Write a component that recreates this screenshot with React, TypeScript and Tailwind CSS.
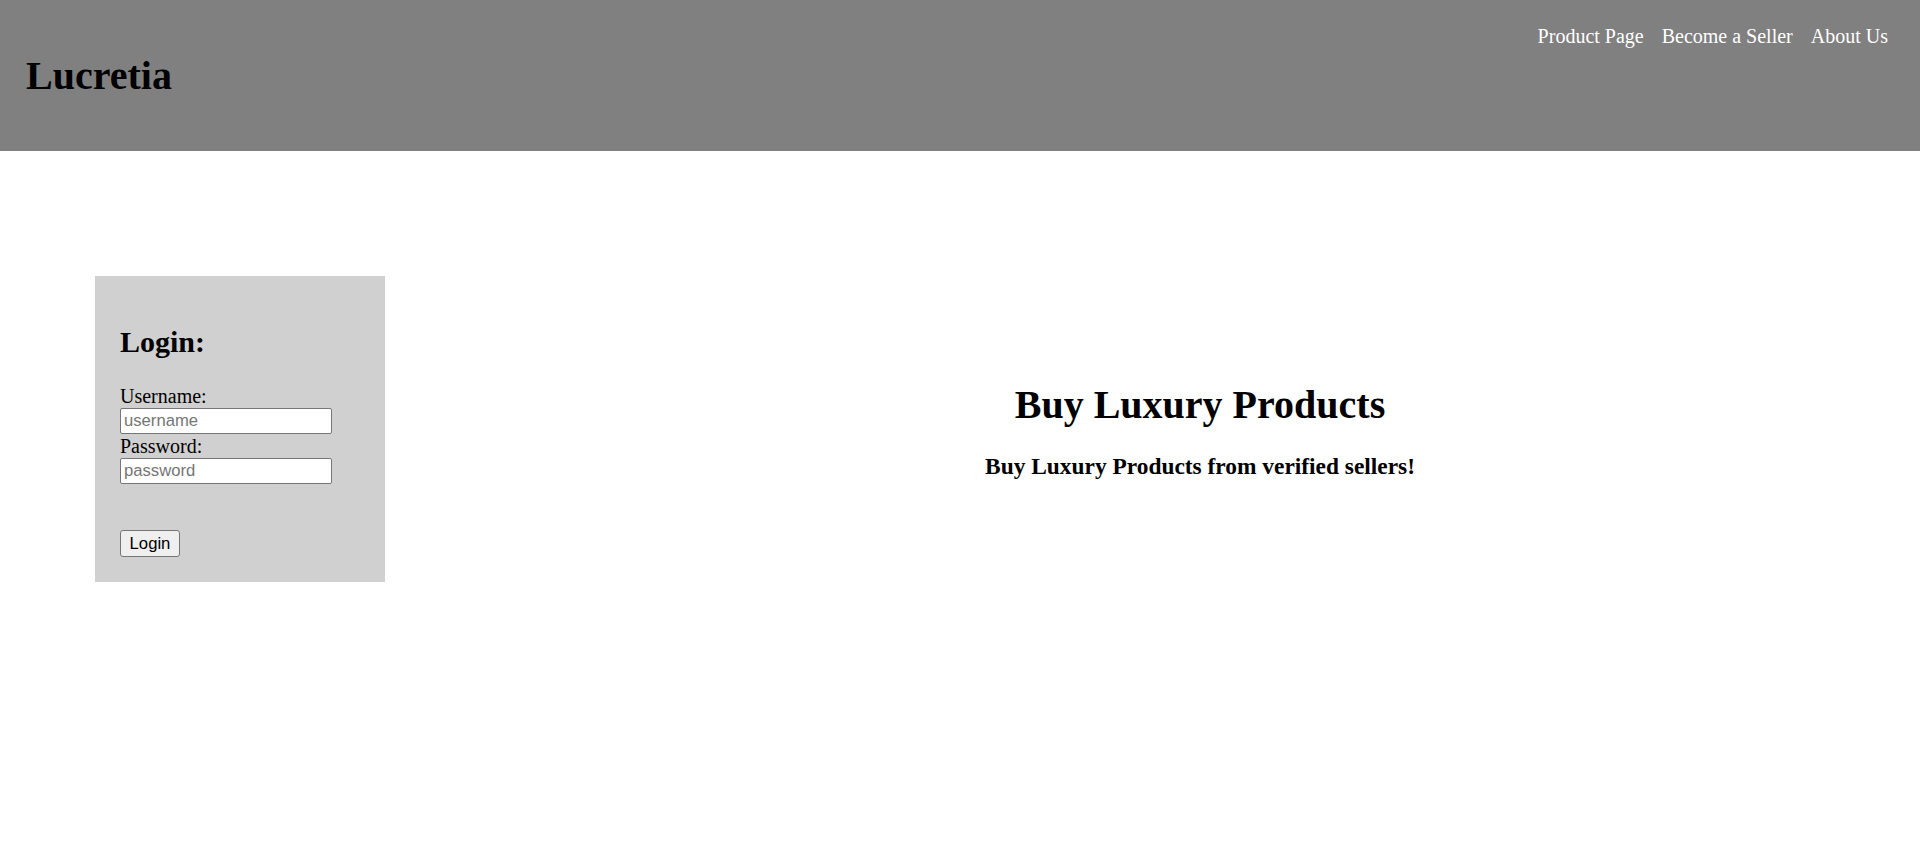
function Header() {
  return (
    <header className="h-[151px] bg-[#808080] flex justify-between">
      <h1 className="pl-[26px] pt-[53px] text-[40px] leading-[46px] font-bold text-black">
        Lucretia
      </h1>
      <nav className="flex gap-[18px] pr-[32px] pt-[25px] text-[20px] leading-[23px] text-white">
        <a href="#">Product Page</a>
        <a href="#">Become a Seller</a>
        <a href="#">About Us</a>
      </nav>
    </header>
  );
}

function LoginBox() {
  return (
    <div className="w-[290px] shrink-0 bg-[#d0d0d0] px-[25px] pt-[48px] pb-[25px]">
      <h2 className="text-[30px] leading-[35px] font-bold">Login:</h2>
      <form className="mt-[25px]" onSubmit={(e) => e.preventDefault()}>
        <label className="block text-[20px] leading-[24px]">Username:</label>
        <input
          type="text"
          placeholder="username"
          className="block h-[26px] w-[212px] rounded-[2px] border border-[#767676] bg-white px-[3px] font-['Liberation_Sans',Arial,sans-serif] text-[16.67px] placeholder:text-[#757575]"
        />
        <label className="block text-[20px] leading-[24px]">Password:</label>
        <input
          type="password"
          placeholder="password"
          className="block h-[26px] w-[212px] rounded-[2px] border border-[#767676] bg-white px-[3px] font-['Liberation_Sans',Arial,sans-serif] text-[16.67px] placeholder:text-[#757575]"
        />
        <button
          type="submit"
          className="mt-[46px] h-[27px] w-[60px] rounded-[3px] border border-[#767676] bg-[#efefef] font-['Liberation_Sans',Arial,sans-serif] text-[16.67px] text-black"
        >
          Login
        </button>
      </form>
    </div>
  );
}

export default function App() {
  return (
    <div className="min-h-screen bg-white font-['Liberation_Serif','Times_New_Roman',serif] text-black">
      <Header />
      <main className="flex items-start pt-[125px]">
        <div className="ml-[95px]">
          <LoginBox />
        </div>
        <div className="ml-[95px] flex-1 pt-[106px] text-center">
          <h1 className="text-[40px] leading-[46px] font-bold">Buy Luxury Products</h1>
          <h3 className="mt-[25px] text-[23.4px] leading-[27px] font-bold">
            Buy Luxury Products from verified sellers!
          </h3>
        </div>
      </main>
    </div>
  );
}
